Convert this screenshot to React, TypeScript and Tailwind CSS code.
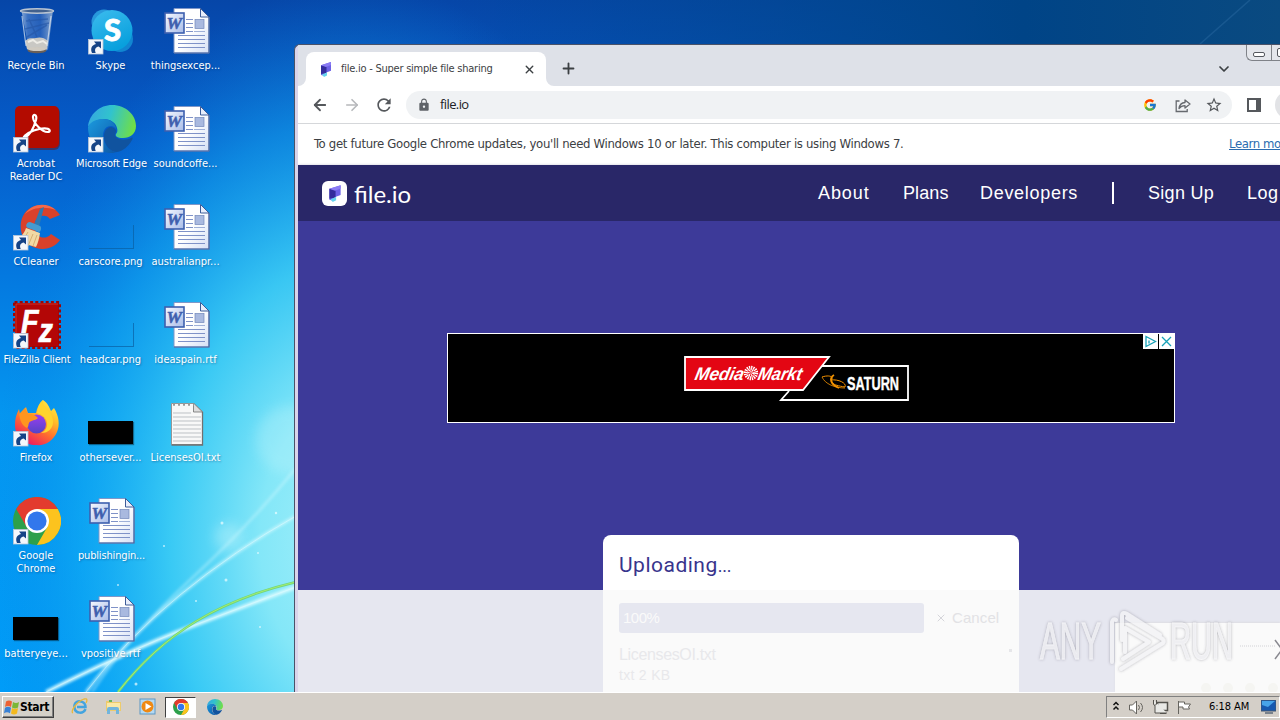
import type { ReactNode } from "react";
import { ChevronDown, Plus, X, ArrowLeft, ArrowRight } from "lucide-react";
import { FcGoogle } from "react-icons/fc";
import { MdLock, MdRefresh, MdStarBorder } from "react-icons/md";

const ui = "font-['DejaVu_Sans_Condensed','DejaVu_Sans',sans-serif]";

function Shortcut() {
  return (
    <g>
      <rect x="0.5" y="32.500" width="14.500" height="14.500" fill="#f4f7fc" stroke="#b9c6d8" strokeWidth=".8" />
      <path d="M4 46c-2-5 0-8 4-9l-2-2.500h7v7l-2.300-2c-3 .6-4.500 2.500-3 6.500z" fill="#154386" />
    </g>
  );
}

function Icon({ children, shortcut }: { children: ReactNode; shortcut?: boolean }) {
  return (
    <svg width="48" height="48" viewBox="0 0 48 48" className="block">
      {children}
      {shortcut && <Shortcut />}
    </svg>
  );
}

function RecycleBin() {
  return (
    <Icon>
      <defs>
        <linearGradient id="bin" x1="0" x2="1" y1="0" y2="0">
          <stop offset="0" stopColor="#a5bddd" stopOpacity=".85" />
          <stop offset=".2" stopColor="#4f80ca" stopOpacity=".7" />
          <stop offset=".6" stopColor="#3a6fc2" stopOpacity=".6" />
          <stop offset="1" stopColor="#aabfd8" stopOpacity=".8" />
        </linearGradient>
      </defs>
      <path d="M6 4h36l-5.500 38c-.5 3.500-21 3.500-22 0z" transform="translate(3.300 0) scale(.87 1)" fill="url(#bin)" />
      <path d="M13 14l22-2M12 22l24-6M14 30l20-12M16 12l8 18" stroke="#2456a6" strokeWidth="1.600" opacity=".6" />
      <path d="M12 34c4-4 8-2 11-3s8-1 12 3l-1 8c-3 3-17 3-20 0z" fill="#c9c8c4" />
      <path d="M15 35l5-2 4 3 6-2 4 3" stroke="#eeece6" strokeWidth="2" fill="none" />
      <ellipse cx="24" cy="43.500" rx="9.500" ry="2.800" fill="#6b6058" />
      <ellipse cx="24" cy="42" rx="9" ry="2" fill="#cfcac1" />
      <ellipse cx="24" cy="4" rx="16.500" ry="2.200" fill="#42618e" stroke="#b9c4d2" strokeWidth="1.400" />
      <path d="M9 9l4 30M38 9l-4 30" stroke="#dfe8f2" strokeWidth="1.200" opacity=".7" />
    </Icon>
  );
}

function Skype() {
  return (
    <Icon shortcut>
      <defs>
        <linearGradient id="sk" x1="0" y1="0" x2=".5" y2="1">
          <stop offset="0" stopColor="#3dbcee" />
          <stop offset="1" stopColor="#08a0dd" />
        </linearGradient>
      </defs>
      <circle cx="16" cy="15" r="12.500" fill="#2898dc" />
      <circle cx="32" cy="32" r="13" fill="#1186d1" />
      <circle cx="24" cy="23.500" r="20.500" fill="url(#sk)" />
      <text x="24.500" y="34" textAnchor="middle" fontSize="31" fontWeight="900" fontFamily="Lato" fill="#fff" stroke="#fff" strokeWidth=".8">S</text>
    </Icon>
  );
}

function Acrobat() {
  return (
    <Icon shortcut>
      <rect x="3" y="2" width="44" height="43" rx="6" fill="#66100c" opacity=".5" />
      <rect x="2" y="1" width="44" height="42" rx="5" fill="#b30b00" />
      <path d="M12 32.500C17 30 21 22 23 15c1.500-6-3.500-6.500-3 -2.500 .6 6 9 14.500 14.500 14.500 4 0 2.500-3.700-3-3.700C25 23.300 16 27 12 30.500c-2.200 2.200-1 3 0 2z" fill="none" stroke="#fff" strokeWidth="2.200" strokeLinejoin="round" />
    </Icon>
  );
}

function EdgeArt() {
  return (
    <g>
      <defs>
        <linearGradient id="edTop" x1="0" y1=".3" x2="1" y2=".5">
          <stop offset="0" stopColor="#35a8e0" />
          <stop offset=".45" stopColor="#31c3cd" />
          <stop offset="1" stopColor="#71df45" />
        </linearGradient>
        <linearGradient id="edLow" x1="0" y1="0" x2="1" y2="1">
          <stop offset="0" stopColor="#1c9ade" />
          <stop offset="1" stopColor="#0c56a6" />
        </linearGradient>
      </defs>
      <path d="M0 22C1 9 12 0 24 0c14 0 24 10 24 21 0 8-6 12-13 12-6 0-8-2-7-4 1-1 2-3 1-6-1-5-6-9-14-9C8 15 2 18 0 22z" fill="url(#edTop)" />
      <path d="M0 22c3-6 9-8 15-8 8 0 13 5 13 10-1-2-3-3-5-3-5 0-8 4-8 10 0 9 7 16 14 16-3 1-5 1-7 1C9 47 0 36 0 22z" fill="url(#edLow)" />
      <path d="M16 31c0-5 3-8 6-9 3 0 6 2 6 4 0 2-2 4 0 6 4 4 11 3 15 1 2-1 2 0 1 2-4 7-9 11-15 12-7 0-13-7-13-16z" fill="#10539f" />
    </g>
  );
}

function ChromeArt() {
  return (
    <g>
      <circle cx="24" cy="24" r="24" fill="#2da04b" />
      <path d="M24 12h20.800A24 24 0 0 1 24 48l10.400-18z" fill="#fcc31e" />
      <path d="M3.200 12A24 24 0 0 1 44.800 12H24L13.600 30z" fill="#e33b2e" />
      <circle cx="24" cy="24" r="12" fill="#fff" />
      <circle cx="24" cy="24" r="9.600" fill="#3277ec" />
    </g>
  );
}

function CCleaner() {
  return (
    <Icon shortcut>
      <path d="M47 12C39-1 18-2 10 13c-6 12 0 29 13 32 10 3 19-1 24-8l-9-6c-5 6-13 4-15-2-3-8-1-14 5-16 4-1 7 0 9 3z" fill="#d9412b" />
      <path d="M43 7C34-1 19 0 12 11c8-7 20-8 31-4z" fill="#f46a4a" />
      <path d="M27 6l4-2-5 20-5-2z" fill="#2d79b0" />
      <path d="M17 19l10 4c2 1 1 6-1 6l-11-4c-3-1-2-6 2-6z" fill="#459bd0" />
      <path d="M13 25l14 5c-1 6-2 10-4 14L1 38c6-3 10-7 12-13z" fill="#f2d9a4" />
      <path d="M15 29l-6 10M20 31l-5 12M24 32l-4 11" stroke="#d6b072" strokeWidth="1" />
    </Icon>
  );
}

function FileZilla() {
  return (
    <Icon shortcut>
      <rect x="2" y="2" width="44" height="44" fill="#b30606" />
      <rect x="1.500" y="1.500" width="45" height="45" fill="none" stroke="#9c0505" strokeWidth="3" strokeDasharray="3 2.200" />
      <path d="M3 42V3h42" stroke="#cb3027" fill="none" />
      <text x="8" y="32" fontSize="33" fontStyle="italic" fontWeight="700" fontFamily="Liberation Sans" fill="#fff" stroke="#fff" strokeWidth=".6" textLength="32" lengthAdjust="spacingAndGlyphs">F<tspan dy="9">z</tspan></text>
    </Icon>
  );
}

function Firefox() {
  return (
    <Icon shortcut>
      <defs>
        <linearGradient id="fx" x1=".9" y1="0" x2=".3" y2="1">
          <stop offset="0" stopColor="#fff14a" />
          <stop offset=".35" stopColor="#ffbd28" />
          <stop offset=".65" stopColor="#ff6a30" />
          <stop offset="1" stopColor="#ec1665" />
        </linearGradient>
        <linearGradient id="fxp" x1="0" y1="0" x2="0" y2="1">
          <stop offset="0" stopColor="#9b3df0" />
          <stop offset="1" stopColor="#5445c6" />
        </linearGradient>
      </defs>
      <path d="M30 1c5 3 6 7 8 11l3-3c5 8 6 17 3 24-4 9-12 14-21 13C11 46 2 38 2 26c0-6 1-10 4-16l1 5 6-7 2 6h8c1-5 3-10 7-13z" fill="url(#fx)" />
      <circle cx="23.500" cy="25" r="9.500" fill="url(#fxp)" />
      <path d="M6 15l6-6 3 6c4 0 6 0 10 4-3 3-8 2-9 5-1 2 0 3-2 5-5-2-7-8-8-14z" fill="#ff951e" />
      <path d="M24 14c8 2 11 8 10 13-1 4-4 6-6 7 8 0 12-5 12-11 0-7-4-11-7-14-3-3-3-6-3-8-4 4-5 8-6 13z" fill="#ffd42e" />
    </Icon>
  );
}

function WordDoc() {
  return (
    <Icon>
      <defs>
        <linearGradient id="pg" x1="0" y1="0" x2="1" y2="1">
          <stop offset=".5" stopColor="#fff" />
          <stop offset="1" stopColor="#d5dff5" />
        </linearGradient>
        <linearGradient id="wb" x1="0" y1="0" x2="1" y2="1">
          <stop offset="0" stopColor="#f5f8ff" />
          <stop offset="1" stopColor="#a9bce8" />
        </linearGradient>
      </defs>
      <path d="M11 1.500h26.500L46 10v36H11z" fill="url(#pg)" stroke="#7f97c8" strokeWidth="1" />
      <path d="M11 46h35V10" fill="none" stroke="#49659f" strokeWidth="1.200" />
      <path d="M37.500 1.500V10H46z" fill="#e8eefb" stroke="#3e5c98" strokeWidth="1" />
      <path d="M23 12.500h7M23 16.500h7M23 20.500h7M23 24.500h7M15 28.500h27M15 32.500h27M15 36.500h27M15 40.500h27" stroke="#7f92c8" strokeWidth="1.200" />
      <path d="M31 24.500h11" stroke="#9fb0d8" strokeWidth="1" />
      <rect x="32" y="12.500" width="9" height="9" fill="#a9b9df" stroke="#7187ba" strokeWidth=".7" />
      <rect x="2" y="6" width="19" height="20" fill="url(#wb)" stroke="#3d5fae" strokeWidth="1.600" />
      <text x="3.500" y="22" fontSize="17" fontStyle="italic" fontWeight="700" fontFamily="Liberation Serif" fill="#3f5fae" stroke="#3f5fae" strokeWidth=".5" textLength="15.500" lengthAdjust="spacingAndGlyphs">W</text>
    </Icon>
  );
}

function TextDoc() {
  return (
    <Icon>
      <path d="M8.500 4.500h22l9 8v33h-31z" fill="#f8f8f8" stroke="#969696" strokeWidth="1" />
      <path d="M39.500 13v33h-31" stroke="#707070" fill="none" strokeWidth="1.300" />
      <path d="M30.500 4v9h9z" fill="#ddd" stroke="#707070" strokeWidth=".8" />
      <path d="M10 14h18M10 18h28M10 22h28M10 26h28M10 30h28M10 34h28M10 38h28M10 42h28" stroke="#bdc1c5" strokeWidth="1" />
      <path d="M10 5.500h21" stroke="#999" strokeWidth="2.500" strokeDasharray="2 3" />
    </Icon>
  );
}

function BlackThumb() {
  return (
    <div className="flex h-12 w-12 items-end justify-center pb-[3px]">
      <div className="mr-[3px] h-[23px] w-[45px] bg-black shadow-[1px_1px_1px_rgba(0,0,0,0.4)]" />
    </div>
  );
}

function ClearThumb() {
  return (
    <div className="flex h-12 w-12 items-end justify-center pb-[2px]">
      <div className="h-6 w-[45px] border-r border-b border-[#0a5fa3]/70" />
    </div>
  );
}

const shortcuts: { name: string; icon: ReactNode }[] = [
  { name: "Recycle Bin", icon: <RecycleBin /> },
  { name: "Acrobat Reader DC", icon: <Acrobat /> },
  { name: "CCleaner", icon: <CCleaner /> },
  { name: "FileZilla Client", icon: <FileZilla /> },
  { name: "Firefox", icon: <Firefox /> },
  { name: "Google Chrome", icon: <Icon shortcut><ChromeArt /></Icon> },
  { name: "batteryeye...", icon: <BlackThumb /> },
  { name: "Skype", icon: <Skype /> },
  { name: "Microsoft Edge", icon: <Icon shortcut><EdgeArt /></Icon> },
  { name: "carscore.png", icon: <ClearThumb /> },
  { name: "headcar.png", icon: <ClearThumb /> },
  { name: "othersever...", icon: <BlackThumb /> },
  { name: "publishingin...", icon: <WordDoc /> },
  { name: "vpositive.rtf", icon: <WordDoc /> },
  { name: "thingsexcep...", icon: <WordDoc /> },
  { name: "soundcoffe...", icon: <WordDoc /> },
  { name: "australianpr...", icon: <WordDoc /> },
  { name: "ideaspain.rtf", icon: <WordDoc /> },
  { name: "LicensesOI.txt", icon: <TextDoc /> },
];

const wideLabels = ["FileZilla Client", "Microsoft Edge", "publishingin..."];

function Wallpaper() {
  return (
    <svg width="1280" height="692" viewBox="0 0 1280 692" className="absolute inset-0" preserveAspectRatio="none">
      <defs>
        <linearGradient id="sky" x1="0" y1="0" x2="0" y2="1">
          <stop offset="0" stopColor="#0646a8" />
          <stop offset=".2" stopColor="#055cca" />
          <stop offset=".4" stopColor="#0479e0" />
          <stop offset=".6" stopColor="#0496f0" />
          <stop offset="1" stopColor="#009cf8" />
        </linearGradient>
        <radialGradient id="glow" gradientUnits="userSpaceOnUse" cx="0" cy="0" r="1" gradientTransform="translate(350 540) scale(360 560)">
          <stop offset="0" stopColor="#a4f0fa" />
          <stop offset=".25" stopColor="#84e7f8" />
          <stop offset=".5" stopColor="#3fcff5" stopOpacity=".9" />
          <stop offset=".75" stopColor="#16aef2" stopOpacity=".5" />
          <stop offset="1" stopColor="#0a80e0" stopOpacity="0" />
        </radialGradient>
        <linearGradient id="dusk" x1="0" x2="1" y1="0" y2="0">
          <stop offset=".35" stopColor="#004b90" stopOpacity="0" />
          <stop offset=".8" stopColor="#004487" />
          <stop offset="1" stopColor="#0a4a80" />
        </linearGradient>
        <filter id="soft"><feGaussianBlur stdDeviation="1.600" /></filter>
        <filter id="haze" x="-50%" y="-50%" width="200%" height="200%"><feGaussianBlur stdDeviation="6" /></filter>
      </defs>
      <rect width="1280" height="692" fill="url(#sky)" />
      <rect width="750" height="692" fill="url(#glow)" />
      <rect width="1280" height="60" fill="url(#dusk)" />
      <path d="M1200 44L1250 0" stroke="#3f7db4" strokeWidth="1.500" opacity=".3" />
      <circle cx="229" cy="537" r="14" fill="#c6f6fc" opacity=".4" filter="url(#haze)" />
      <circle cx="290" cy="440" r="34" fill="#c6f6fc" opacity=".3" filter="url(#haze)" />
      <g fill="none" filter="url(#soft)" stroke="#d8fbff">
        <path d="M46 692Q130 650 190 627T296 587" strokeWidth="3.500" />
        <path d="M86 692Q125 640 180 595T296 516" strokeWidth="2.500" opacity=".8" />
        <path d="M92 692Q130 635 190 580T296 468" strokeWidth="2" opacity=".5" />
      </g>
      <path d="M86 692Q125 640 180 595T296 516M46 692Q130 650 190 627T296 587" stroke="#e2fcff" strokeWidth="1" fill="none" opacity=".5" />
      <path d="M118 692C165 632 220 600 296 582" stroke="#72d77b" strokeWidth="2.600" fill="none" />
      <path d="M118 692C165 632 220 600 296 582" stroke="#a5eb70" strokeWidth="1" fill="none" />
      <g fill="#effdff" opacity=".7">
        <circle cx="222" cy="523" r="1.500" /><circle cx="276" cy="513" r="1.200" /><circle cx="258" cy="553" r="1" />
        <circle cx="226" cy="580" r="1.500" /><circle cx="136" cy="684" r="1.500" /><circle cx="118" cy="585" r="1" />
        <circle cx="164" cy="546" r="1" /><circle cx="196" cy="601" r="1" /><circle cx="260" cy="627" r="1" />
      </g>
    </svg>
  );
}

function FileMark({ size }: { size: number }) {
  return (
    <svg width={size} height={size} viewBox="0 0 16 16" className="shrink-0">
      <path d="M3 4.200L13 1v8.800L7 12v3l-4-1z" fill="#6e62e6" />
      <path d="M3 4.200L8.500 5.500V12L3 13z" fill="#332c9c" />
      <path d="M3 4.200L13 1v3L8 6z" fill="#8a7bf4" />
      <path d="M4 13.500l5-2v3L6 16z" fill="#65d4ed" />
    </svg>
  );
}

function TabStrip() {
  return (
    <div className="flex h-[42px] shrink-0 items-end bg-[#dee1e8] pl-[8px]">
      <div className="relative flex h-[34px] w-[240px] shrink-0 items-center rounded-t-lg bg-white pr-[10px] pl-[12px]">
        <svg width="8" height="8" className="absolute bottom-0 -left-2"><path d="M8 0v8H0a8 8 0 0 0 8-8z" fill="#fff" /></svg>
        <svg width="8" height="8" className="absolute -right-2 bottom-0"><path d="M0 0v8h8A8 8 0 0 1 0 0z" fill="#fff" /></svg>
        <FileMark size={16} />
        <span className={`${ui} ml-[7px] text-[11px] tracking-[-0.24px] whitespace-nowrap text-[#3c4043]`}>file.io - Super simple file sharing</span>
        <X className="ml-auto shrink-0" size={13} strokeWidth={2.6} color="#3c4043" />
      </div>
      <Plus className="mb-[9px] ml-[14px] shrink-0" size={17} strokeWidth={2.6} color="#3c4043" />
      <ChevronDown className="mr-[14px] mb-[9px] ml-auto shrink-0" size={16} strokeWidth={2.6} color="#3c4043" />
      <div className="flex h-[17px] w-[34px] shrink-0 self-start overflow-hidden rounded-bl-md border border-t-0 border-r-0 border-[#7f8288] bg-[#e4e6eb]">
        <div className="flex w-[25px] shrink-0 items-center justify-center border-r border-[#7f8288] pt-[5px]">
          <div className="h-[5px] w-[12px] rounded-[2px] border border-[#55585e] bg-white" />
        </div>
        <div className="mt-1 ml-[5px] h-[9px] w-3 shrink-0 rounded-[2px] border border-[#55585e] bg-white" />
      </div>
    </div>
  );
}

function Toolbar() {
  return (
    <div className="flex h-[38px] shrink-0 items-center border-b border-[#d5d7da] bg-white pl-[13px]">
      <ArrowLeft className="shrink-0" size={18} strokeWidth={2.4} color="#55585c" />
      <ArrowRight className="ml-[14px] shrink-0" size={18} strokeWidth={2.2} color="#b6b8bb" />
      <MdRefresh className="ml-[13px] shrink-0" size={20} color="#55585c" />
      <div className="ml-[12px] flex h-7 w-[826px] shrink-0 items-center rounded-full bg-[#f0f2f4] pr-[9px] pl-[11px]">
        <MdLock size={14} color="#5f6368" />
        <span className="ml-[9px] font-['Open_Sans',sans-serif] text-[13px] tracking-[-0.6px] text-[#202124]">file.io</span>
        <FcGoogle className="ml-auto" size={14} />
        <svg className="ml-[18px]" width="16" height="16" viewBox="0 0 16 16" fill="none" stroke="#66696e" strokeWidth="1.300">
          <path d="M4.500 4H1.200v10.500h11V12" />
          <path d="M4 11.500C4.500 8 6.500 5.700 10 5.500V3l5 4-5 4V8.700C7.500 8.700 5.500 9.500 4 11.500z" strokeLinejoin="round" />
        </svg>
        <MdStarBorder className="ml-[14px]" size={18} color="#55585c" />
      </div>
      <div className="ml-[15px] h-[14px] w-[14px] shrink-0 border-2 border-r-[5px] border-[#55585c]" />
      <div className="ml-[14px] h-7 w-7 shrink-0 rounded-full bg-[#e2e3e6]" />
    </div>
  );
}

function InfoBar() {
  return (
    <div className={`${ui} flex h-[41px] shrink-0 items-center bg-white pb-[2px] pl-4 text-[13px] whitespace-nowrap`}>
      <span className="w-[915px] shrink-0 text-[#3c4043]">
        <span className="tracking-[-0.31px]">To get future Google Chrome updates, you'll need Windows 10 or later. This computer is using Windows 7.</span>
      </span>
      <span className="tracking-[-0.4px] text-[#2b6cb0] underline">Learn mo</span>
    </div>
  );
}

function SiteHeader() {
  return (
    <div className="flex h-[56px] shrink-0 items-center bg-[#292768] pl-6 whitespace-nowrap text-white shadow-[0_1px_3px_rgba(30,25,90,0.5)]">
      <div className="flex h-[25px] w-[25px] shrink-0 items-center justify-center rounded-md bg-white">
        <FileMark size={18} />
      </div>
      <span className="mt-[2px] ml-[7px] w-[464px] shrink-0 font-['Lato',sans-serif] text-[24px] leading-7">file.io</span>
      <nav className="flex shrink-0 items-center font-['Liberation_Sans',sans-serif] text-[18px] leading-6">
        <span className="w-[85px] tracking-[0.900px]">About</span>
        <span className="w-[77px] tracking-[0.100px]">Plans</span>
        <span className="w-[132px] tracking-[0.700px]">Developers</span>
        <span className="mr-[34px] h-[22px] w-[2px] bg-white" />
        <span className="w-[99px] tracking-[0.300px]">Sign Up</span>
        <span className="tracking-[0.500px]">Log</span>
      </nav>
    </div>
  );
}

function AdBanner() {
  return (
    <div className="ml-[149px] flex h-[90px] w-[728px] items-start justify-between border border-white bg-black">
      <svg width="240" height="88" viewBox="683 334 240 88" className="ml-[235px]">
        <path d="M814 366H908V400H781L789 391" fill="#000" stroke="#fff" strokeWidth="1.800" />
        <path d="M685 357H829L803 390H685z" fill="#e30613" stroke="#fff" strokeWidth="1.800" />
        <g fill="#fff" fontFamily="Liberation Sans" fontSize="18" fontWeight="700" fontStyle="italic">
          <text x="694" y="380" transform="skewX(-12)" style={{ transformOrigin: "694px 380px" }} textLength="49" lengthAdjust="spacingAndGlyphs">Media</text>
          <text x="757" y="380" transform="skewX(-12)" style={{ transformOrigin: "757px 380px" }} textLength="44" lengthAdjust="spacingAndGlyphs">Markt</text>
        </g>
        <circle cx="751" cy="373" r="5.200" fill="none" stroke="#fff" strokeWidth="4" strokeDasharray="1.200 .8" />
        <circle cx="751" cy="373" r="2" fill="none" stroke="#fff" strokeWidth="3" strokeDasharray=".9 .9" />
        <g fill="none" stroke="#f39200">
          <path d="M822 377c6-2 11-1 10 2s-1 6 13 8c2-4-7-8-14-7" strokeWidth="1" />
          <path d="M834 375c-5 3-4 9 5 13" strokeWidth="1.800" />
          <path d="M822 377c3 7 13 11 23 11" strokeWidth=".8" />
        </g>
        <text x="847" y="389.500" fill="#fff" stroke="#fff" strokeWidth=".4" fontFamily="Liberation Sans" fontSize="18" fontWeight="700" textLength="52" lengthAdjust="spacingAndGlyphs">SATURN</text>
      </svg>
      <div className="flex gap-px">
        <svg width="15" height="15" className="bg-white" fill="none" stroke="#18a2b8" strokeWidth="1.300"><path d="M3 2.500v10l9.500-5zM6 6.500v3" /></svg>
        <svg width="15" height="15" className="bg-white" fill="none" stroke="#18a2b8" strokeWidth="1.300"><path d="M3 3l9 9M12 3l-9 9" /></svg>
      </div>
    </div>
  );
}

function UploadCard() {
  return (
    <div className="mt-[112px] ml-[305px] h-[157px] w-[416px] rounded-t-lg bg-[linear-gradient(#fff_55px,#fafafa_55px)] px-4 pt-[18px] font-['Liberation_Sans',sans-serif]">
      <div className="h-6 font-['Roboto',sans-serif] text-[21px] leading-6 tracking-[0.500px] text-[#38348c]">Uploading<span className="text-[18px] tracking-[-0.3px]">...</span></div>
      <div className="mt-[26px] flex items-center">
        <div className="flex h-[30px] w-[305px] items-center rounded-[3px] bg-[#e6e7f0] pl-1 text-[15px] tracking-[-0.5px] text-[#fafafa]">100%</div>
        <X className="ml-[11px]" size={12} color="#d5d5da" />
        <span className="ml-[5px] text-[15px] tracking-[0.100px] text-[#e2e2e5]">Cancel</span>
      </div>
      <div className="mt-[12px] flex justify-between text-[16px] leading-[20px] text-[#e8e8eb]"><span className="tracking-[-0.35px]">LicensesOI.txt</span><span className="mt-[4px] mr-[-9px] h-[3px] w-[3px] bg-[#e6e6e9]" /></div>
      <div className="text-[14px] leading-[20px] tracking-[0.300px] text-[#e8e8eb]">txt 2 KB</div>
    </div>
  );
}

function Watermark() {
  return (
    <svg className="absolute top-[600px] left-[1030px]" width="250" height="92" viewBox="1030 600 250 92">
      <defs>
        <filter id="wm" x="-20%" y="-20%" width="140%" height="140%">
          <feDropShadow dx="0" dy="0" stdDeviation="1.500" floodColor="#666672" floodOpacity=".6" />
        </filter>
      </defs>
      <g filter="url(#wm)" fill="none" stroke="#f3f3f6" opacity=".8">
        <g fontFamily="Liberation Sans" fontSize="51" fill="#ededf1" stroke="#f6f6f8" strokeWidth=".8">
          <text x="1040" y="659" textLength="61" lengthAdjust="spacingAndGlyphs">ANY</text>
          <text x="1170" y="659" textLength="63" lengthAdjust="spacingAndGlyphs">RUN</text>
        </g>
        <g strokeWidth="4" strokeLinejoin="round" strokeLinecap="round">
          <path d="M1122 640v-24q0-5 5-2l33 21" />
          <path d="M1112 662v-40q1-4 4-2M1121 669l42-26q2-3-2-5l-34-20" />
          <path d="M1125 652v-24l24 14-26 17" />
        </g>
      </g>
      <path d="M1240 646h35" stroke="#d2d2d6" strokeDasharray="1 1" />
      <g fill="#f5f5f2"><circle cx="1206" cy="688" r="5" /><circle cx="1228" cy="688" r="5" /><circle cx="1250" cy="688" r="5" /><circle cx="1273" cy="688" r="5" /></g>
      <path d="M1275 640l7 9.500-7 9.500" stroke="#898990" strokeWidth="1.500" fill="none" />
    </svg>
  );
}

function Browser() {
  return (
    <div className="absolute top-[44px] left-[294px] flex h-[648px] w-[986px] overflow-hidden rounded-tl-md border-t border-l border-[#4a5268] bg-[#d9d4ea] pl-[3px]">
      <div className="-mt-px flex h-[648px] w-[982px] shrink-0 flex-col overflow-hidden">
        <TabStrip />
        <Toolbar />
        <InfoBar />
        <SiteHeader />
        <div className="relative h-[471px] bg-[linear-gradient(#3d3a99_369px,#e6e7f0_369px)] pt-[112px]">
          <AdBanner />
          <UploadCard />
          <div className="absolute top-[402px] left-[817px] h-[69px] w-[165px] bg-[#fafafa] shadow-[0_-1px_2px_#dddde2]" />
        </div>
      </div>
    </div>
  );
}

function Taskbar() {
  return (
    <div className={`${ui} relative flex h-7 items-center border-t border-white bg-[#d4cfc8] pl-[2px]`}>
      <div className="mt-px flex h-[22px] w-[52px] items-center border border-t-white border-r-[#404040] border-b-[#404040] border-l-white bg-[#d4d0c8] pl-[1px] shadow-[inset_-1px_-1px_0_#808080]">
        <svg width="16" height="16" viewBox="0 0 16 16" className="shrink-0">
          <path d="M2 2.500q3-2 6 0L7 8Q4 6 1 8z" fill="#ed6133" />
          <path d="M9 3q3 2 6 0l-1 5.500q-3 2-6 0z" fill="#7bb738" />
          <path d="M1 8.700q3-2 6 0l-1 5.500q-3-2-6 0z" fill="#3981d5" />
          <path d="M8 9q3 2 6 0l-1 5.500q-3 2-6 0z" fill="#f4b91e" />
        </svg>
        <span className="text-[12px] font-bold tracking-[-0.3px] text-black">Start</span>
      </div>
      <svg className="ml-[17px]" width="17" height="17" viewBox="0 0 17 17" fill="none">
        <path d="M14.500 11c-2 5-10 5-11-1s4-8 8-6c2 1 3 3 3 5H6" stroke="#43a4df" strokeWidth="2.500" />
        <path d="M2 15C-1 14 5 4 13 1c4-1 3 2 2 4" stroke="#e9b83a" strokeWidth="1.300" />
      </svg>
      <svg className="ml-[17px]" width="17" height="17" viewBox="0 0 17 17">
        <path d="M1 3h5l1 1h9v9H1z" fill="#edcb6b" /><path d="M2 5h13v7H2z" fill="#fae8a6" />
        <path d="M2 16v-5q0-2 2-2h8q2 0 2 2v5h-3v-4H5v4z" fill="#72b5dc" /><path d="M4 3h3" stroke="#63b35d" strokeWidth="2" />
      </svg>
      <svg className="ml-[17px]" width="17" height="17" viewBox="0 0 17 17">
        <rect x="1" y="1" width="15" height="15" fill="#b5d9f2" stroke="#5c98c4" />
        <circle cx="8.500" cy="8.500" r="6" fill="#ef8913" /><path d="M6.500 5l6 3.500-6 3.500z" fill="#fff" />
      </svg>
      <div className="mt-px ml-[9px] flex h-[21px] w-[31px] items-center justify-center border border-t-[#404040] border-r-white border-b-white border-l-[#404040] bg-white">
        <svg width="16" height="16" viewBox="0 0 48 48"><ChromeArt /></svg>
      </div>
      <svg className="ml-[11px]" width="16" height="16" viewBox="0 0 48 48"><EdgeArt /></svg>
      <div className="mt-px ml-auto flex h-[22px] w-[174px] items-center border border-t-[#808080] border-r-white border-b-white border-l-[#808080] pl-[5px]">
        <svg className="-mt-[3px]" width="8" height="10" fill="none" stroke="#111" strokeWidth="1.500"><path d="M1.500 4L4 1.500 6.500 4M1.500 8.500L4 6l2.500 2.500" /></svg>
        <svg className="ml-[8px]" width="17" height="15" fill="#fff" stroke="#66645f" strokeWidth="1"><path d="M1.500 5h3l4-4v13l-4-4h-3z" /><path d="M10.500 5q2 2.500 0 5M12.500 3q4 4.500 0 9" fill="none" /></svg>
        <svg className="ml-[7px]" width="17" height="16" fill="#e9e9e6" stroke="#55534e"><path d="M5.500 3.500h10v8h-10z" strokeWidth="1.500" /><path d="M1.500 1v4q0 1 1.500 1.500V14h12M4.500 1v4L3 6.500M8 14.500h6" /></svg>
        <svg className="ml-[7px]" width="17" height="15" fill="#fff" stroke="#66645f"><path d="M2.500 1v13M2.500 2h6v2h6l-2 3 1 2H7V7H2.500z" /></svg>
        <span className="ml-[16px] w-[52px] text-[11px] tracking-[-0.05px] whitespace-nowrap text-black">6:18 AM</span>
        <svg width="15" height="14" viewBox="0 0 15 14"><path d="M0 0h15v11H0z" fill="#1758af" stroke="#45566d" /><path d="M1 1h13L7 7 1 5z" fill="#47a3e9" /><path d="M4 13h8" stroke="#5b6878" strokeWidth="1.500" /></svg>
      </div>
    </div>
  );
}

export default function App() {
  return (
    <div className="h-[720px] w-[1280px] overflow-hidden bg-[#008be8]">
      <div className="relative h-[692px] overflow-hidden">
        <Wallpaper />
        <div className="relative grid w-[225px] grid-flow-col grid-cols-[72px_77px_73px] grid-rows-[repeat(7,98px)] pt-[7px]">
          {shortcuts.map((s) => (
            <div key={s.name} className="flex flex-col items-center">
              <div className="ml-[2px]">{s.icon}</div>
              <div className={`${ui} mt-[4px] w-[74px] text-center text-[11px] leading-[13px] text-white [text-shadow:1px_1px_2px_rgba(0,40,90,0.4)] ${wideLabels.includes(s.name) ? "pl-[2px] tracking-[-0.16px] whitespace-nowrap" : "tracking-normal"}`}>
                {s.name}
              </div>
            </div>
          ))}
        </div>
        <Browser />
        <Watermark />
      </div>
      <Taskbar />
    </div>
  );
}
